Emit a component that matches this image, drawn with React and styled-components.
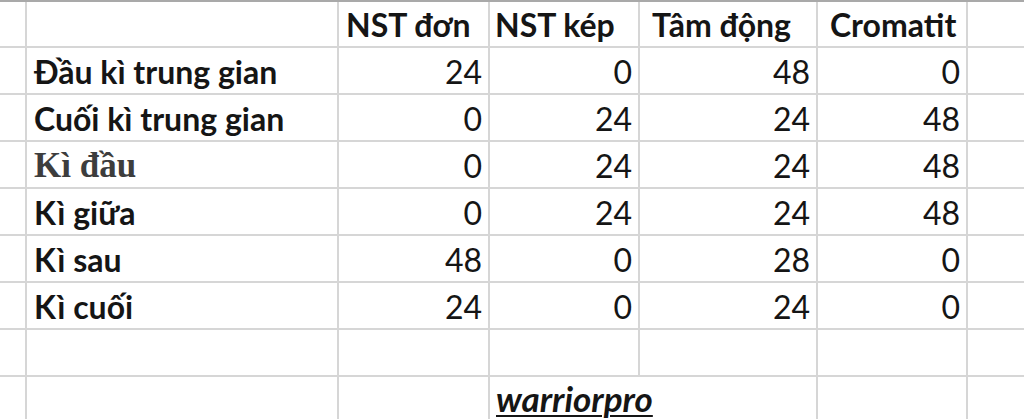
import React from "react";
import styled, { createGlobalStyle } from "styled-components";

const GlobalStyle = createGlobalStyle`
  html, body {
    margin: 0;
    padding: 0;
    background: #ffffff;
    overflow: hidden;
  }
`;

const Sheet = styled.div`
  width: 1024px;
  height: 419px;
  overflow: hidden;
  border-top: 2px solid #a9a9a9;
  box-sizing: border-box;
  display: grid;
  grid-template-columns: 25px 310px 149px 148px 176px 148px 1fr;
  grid-template-rows: 44px repeat(7, 45px) 1fr;
  gap: 2px;
  background: #d6d6d6;
`;

const Cell = styled.div`
  background: #ffffff;
  display: flex;
  align-items: flex-end;
  justify-content: ${(p) => (p.$num ? "flex-end" : "flex-start")};
  padding: 0 ${(p) => (p.$num ? "6px" : "0")} 4px ${(p) => (p.$num ? "0" : `${p.$indent ?? 7}px`)};
  font-family: Lato, "Open Sans", sans-serif;
  font-size: 32px;
  line-height: 34px;
  font-weight: ${(p) => (p.$bold ? 700 : 400)};
  color: #151515;
  white-space: nowrap;
  grid-column: ${(p) => (p.$span ? `span ${p.$span}` : "auto")};
`;

const SerifLabel = styled.span`
  font-family: "Liberation Serif", "DejaVu Serif", serif;
  font-weight: 700;
  font-size: 35px;
  color: #3d3d3d;
`;

const Signature = styled.span`
  font-style: italic;
  font-weight: 700;
  font-size: 35px;
  text-decoration: underline;
  text-decoration-thickness: 2px;
  text-underline-offset: 3px;
`;

const headers = [
  { text: "NST đơn", indent: 7 },
  { text: "NST kép", indent: 5 },
  { text: "Tâm động", indent: 12 },
  { text: "Cromatit", indent: 12 },
];

const rows = [
  { label: "Đầu kì trung gian", values: [24, 0, 48, 0] },
  { label: "Cuối kì trung gian", values: [0, 24, 24, 48] },
  { label: "Kì đầu", values: [0, 24, 24, 48], serif: true },
  { label: "Kì giữa", values: [0, 24, 24, 48] },
  { label: "Kì sau", values: [48, 0, 28, 0] },
  { label: "Kì cuối", values: [24, 0, 24, 0] },
];

export default function App() {
  return (
    <>
      <GlobalStyle />
      <Sheet>
        <Cell />
        <Cell />
        {headers.map((h) => (
          <Cell key={h.text} $bold $indent={h.indent}>
            {h.text}
          </Cell>
        ))}
        <Cell />

        {rows.map((r) => (
          <React.Fragment key={r.label}>
            <Cell />
            <Cell $bold>
              {r.serif ? <SerifLabel>{r.label}</SerifLabel> : r.label}
            </Cell>
            {r.values.map((v, i) => (
              <Cell key={i} $num>
                {v}
              </Cell>
            ))}
            <Cell />
          </React.Fragment>
        ))}

        {[0, 1, 2, 3, 4, 5, 6].map((i) => (
          <Cell key={i} />
        ))}

        <Cell />
        <Cell />
        <Cell />
        <Cell $span={2} $indent={6}>
          <Signature>warriorpro</Signature>
        </Cell>
        <Cell />
        <Cell />
      </Sheet>
    </>
  );
}
